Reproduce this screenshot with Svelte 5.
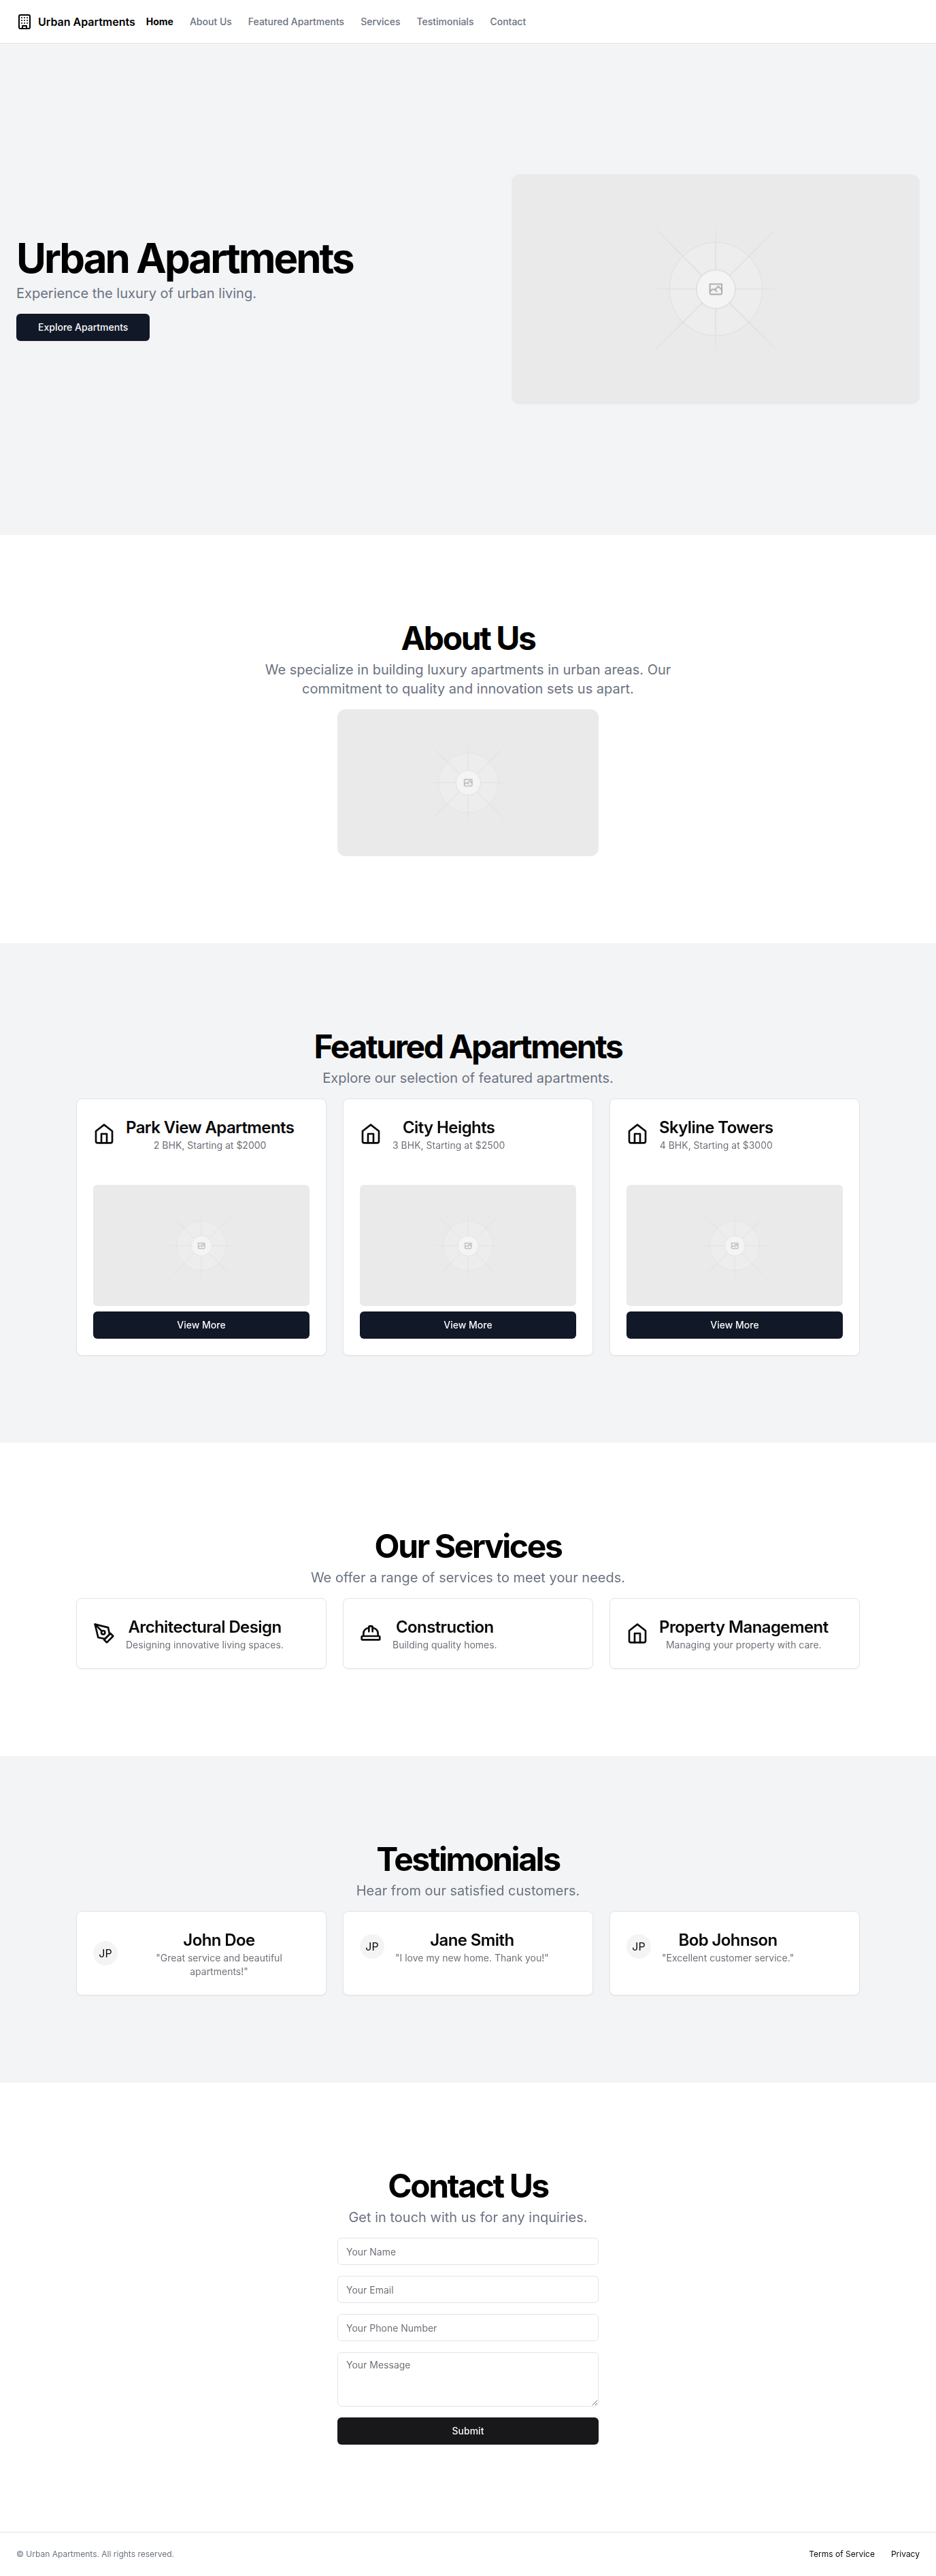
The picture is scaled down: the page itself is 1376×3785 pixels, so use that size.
<script>
  const navLinks = [
    { label: 'Home', href: '#home', active: true },
    { label: 'About Us', href: '#about' },
    { label: 'Featured Apartments', href: '#featured' },
    { label: 'Services', href: '#services' },
    { label: 'Testimonials', href: '#testimonials' },
    { label: 'Contact', href: '#contact' }
  ];

  const apartments = [
    { name: 'Park View Apartments', detail: '2 BHK, Starting at $2000' },
    { name: 'City Heights', detail: '3 BHK, Starting at $2500' },
    { name: 'Skyline Towers', detail: '4 BHK, Starting at $3000' }
  ];

  const services = [
    { icon: 'pen', name: 'Architectural Design', detail: 'Designing innovative living spaces.' },
    { icon: 'hat', name: 'Construction', detail: 'Building quality homes.' },
    { icon: 'home', name: 'Property Management', detail: 'Managing your property with care.' }
  ];

  const testimonials = [
    { name: 'John Doe', quote: '"Great service and beautiful apartments!"' },
    { name: 'Jane Smith', quote: '"I love my new home. Thank you!"' },
    { name: 'Bob Johnson', quote: '"Excellent customer service."' }
  ];
</script>

{#snippet icon(name)}
  <svg
    class="icon"
    class:small={name === 'building'}
    viewBox="0 0 24 24"
    fill="none"
    stroke="currentColor"
    stroke-width="2"
    stroke-linecap="round"
    stroke-linejoin="round"
    aria-hidden="true"
  >
    {#if name === 'building'}
      <rect width="16" height="20" x="4" y="2" rx="2" ry="2" />
      <path d="M9 22v-4h6v4" />
      <path d="M8 6h.01M16 6h.01M12 6h.01M12 10h.01M12 14h.01M16 10h.01M16 14h.01M8 10h.01M8 14h.01" />
    {:else if name === 'pen'}
      <path d="m12 19 7-7 3 3-7 7-3-3z" />
      <path d="m18 13-1.5-7.5L2 2l3.5 14.5L13 18l5-5z" />
      <path d="m2 2 7.586 7.586" />
      <circle cx="11" cy="11" r="2" />
    {:else if name === 'hat'}
      <path d="M2 18a1 1 0 0 0 1 1h18a1 1 0 0 0 1-1v-2a1 1 0 0 0-1-1H3a1 1 0 0 0-1 1v2z" />
      <path d="M10 10V5a1 1 0 0 1 1-1h2a1 1 0 0 1 1 1v5" />
      <path d="M4 15v-3a6 6 0 0 1 6-6h0" />
      <path d="M14 6h0a6 6 0 0 1 6 6v3" />
    {:else}
      <path d="m3 9 9-7 9 7v11a2 2 0 0 1-2 2H5a2 2 0 0 1-2-2z" />
      <polyline points="9 22 9 12 15 12 15 22" />
    {/if}
  </svg>
{/snippet}

{#snippet placeholder(id, label)}
  <svg class="placeholder" viewBox="0 262 1200 675" preserveAspectRatio="xMidYMid slice" role="img" aria-label={label}>
    <defs>
      <linearGradient id="{id}-short" x1="404" x2="797" y1="600" y2="600" gradientUnits="userSpaceOnUse">
        <stop stop-color="#C9C9C9" stop-opacity="0" />
        <stop offset=".208" stop-color="#C9C9C9" />
        <stop offset=".792" stop-color="#C9C9C9" />
        <stop offset="1" stop-color="#C9C9C9" stop-opacity="0" />
      </linearGradient>
      <linearGradient id="{id}-long" x1="324" x2="877" y1="600" y2="600" gradientUnits="userSpaceOnUse">
        <stop stop-color="#C9C9C9" stop-opacity="0" />
        <stop offset=".208" stop-color="#C9C9C9" />
        <stop offset=".792" stop-color="#C9C9C9" />
        <stop offset="1" stop-color="#C9C9C9" stop-opacity="0" />
      </linearGradient>
    </defs>
    <rect width="1200" height="1200" fill="#EAEAEA" />
    <g opacity=".5">
      <circle cx="600.7" cy="599.9" r="136.6" fill="#FAFAFA" stroke="#C9C9C9" stroke-width="2.418" opacity=".5" />
      <g stroke-width="2.418">
        <path stroke="url(#{id}-short)" d="M404 599H797" />
        <path stroke="url(#{id}-short)" d="M404 600H797" transform="rotate(90 600.2 600)" />
        <path stroke="url(#{id}-long)" d="M324 600H877" transform="rotate(45 600.7 600)" />
        <path stroke="url(#{id}-long)" d="M324 600H877" transform="rotate(-45 600.7 600)" />
      </g>
      <circle cx="600.7" cy="599.9" r="56.8" fill="#fff" />
      <path
        fill="#666"
        fill-rule="evenodd"
        d="M616.426 586.58h-31.434v16.176l3.553-3.554.531-.531h9.068l.074-.074 8.463-8.463h2.565l7.18 7.181V586.58Zm-15.715 14.654 3.698 3.699 1.283 1.282-2.565 2.565-1.282-1.283-5.2-5.199h-6.066l-5.514 5.514-.073.073v2.876a2.418 2.418 0 0 0 2.418 2.418h26.598a2.418 2.418 0 0 0 2.418-2.418v-8.317l-8.463-8.463-7.181 7.181-.071.072Zm-19.347 5.442v4.085a6.045 6.045 0 0 0 6.046 6.045h26.598a6.044 6.044 0 0 0 6.045-6.045v-7.108l1.356-1.355-1.282-1.283-.074-.073v-17.989h-38.689v23.43l-.146.146.146.147Z"
      />
      <circle cx="600.7" cy="599.9" r="56.8" fill="none" stroke="#C9C9C9" stroke-width="2.418" />
    </g>
  </svg>
{/snippet}

<header class="topbar">
  <a class="brand" href="#home">
    {@render icon('building')}
    <span>Urban Apartments</span>
  </a>
  <nav aria-label="Main">
    {#each navLinks as link}
      <a href={link.href} class:active={link.active}>{link.label}</a>
    {/each}
  </nav>
</header>

<main>
  <section class="hero shaded" id="home">
    <div class="hero-copy">
      <div class="heading">
        <h1>Urban Apartments</h1>
        <p>Experience the luxury of urban living.</p>
      </div>
      <a class="button explore" href="#featured">Explore Apartments</a>
    </div>
    <div class="frame large">{@render placeholder('hero', 'Urban Apartments')}</div>
  </section>

  <section class="band" id="about">
    <div class="heading">
      <h2>About Us</h2>
      <p>
        We specialize in building luxury apartments in urban areas. Our commitment to quality and innovation sets us
        apart.
      </p>
    </div>
    <div class="frame large narrow">{@render placeholder('about', 'About Us')}</div>
  </section>

  <section class="band shaded" id="featured">
    <div class="heading">
      <h2>Featured Apartments</h2>
      <p>Explore our selection of featured apartments.</p>
    </div>
    <div class="cards">
      {#each apartments as item, i}
        <article class="card">
          <div class="card-head">
            {@render icon('home')}
            <div class="card-text">
              <h3>{item.name}</h3>
              <p>{item.detail}</p>
            </div>
          </div>
          <div class="card-body">
            <div class="frame">{@render placeholder(`apartment-${i}`, item.name)}</div>
            <button class="button" type="button">View More</button>
          </div>
        </article>
      {/each}
    </div>
  </section>

  <section class="band" id="services">
    <div class="heading">
      <h2>Our Services</h2>
      <p>We offer a range of services to meet your needs.</p>
    </div>
    <div class="cards">
      {#each services as item}
        <article class="card">
          <div class="card-head">
            {@render icon(item.icon)}
            <div class="card-text">
              <h3>{item.name}</h3>
              <p>{item.detail}</p>
            </div>
          </div>
        </article>
      {/each}
    </div>
  </section>

  <section class="band shaded" id="testimonials">
    <div class="heading">
      <h2>Testimonials</h2>
      <p>Hear from our satisfied customers.</p>
    </div>
    <div class="cards">
      {#each testimonials as item}
        <article class="card">
          <div class="card-head">
            <span class="avatar">JP</span>
            <div class="card-text">
              <h3>{item.name}</h3>
              <p>{item.quote}</p>
            </div>
          </div>
        </article>
      {/each}
    </div>
  </section>

  <section class="band" id="contact">
    <div class="heading">
      <h2>Contact Us</h2>
      <p>Get in touch with us for any inquiries.</p>
    </div>
    <form class="narrow" onsubmit={(event) => event.preventDefault()}>
      <input type="text" placeholder="Your Name" aria-label="Your Name" />
      <input type="email" placeholder="Your Email" aria-label="Your Email" />
      <input type="tel" placeholder="Your Phone Number" aria-label="Your Phone Number" />
      <textarea placeholder="Your Message" aria-label="Your Message"></textarea>
      <button class="button submit" type="submit">Submit</button>
    </form>
  </section>
</main>

<footer>
  <p>© Urban Apartments. All rights reserved.</p>
  <nav aria-label="Legal">
    <a href="#terms">Terms of Service</a>
    <a href="#privacy">Privacy</a>
  </nav>
</footer>

<style>
  :global(body) {
    margin: 0;
    background: #fff;
    color: #09090b;
    font-family: Inter, 'Liberation Sans', sans-serif;
    font-size: 16px;
    line-height: 24px;
  }

  :global(*) {
    box-sizing: border-box;
  }

  h1,
  h2,
  h3,
  p {
    margin: 0;
  }

  a {
    color: inherit;
    text-decoration: none;
  }

  .icon {
    flex: none;
    width: 32px;
    height: 32px;
  }

  .icon.small {
    width: 24px;
    height: 24px;
  }

  .topbar {
    display: flex;
    align-items: center;
    gap: 16px;
    height: 64px;
    padding: 0 24px;
    border-bottom: 1px solid #e4e4e7;
  }

  .brand {
    display: flex;
    align-items: center;
    gap: 8px;
    color: #000;
    font-weight: 600;
  }

  .topbar nav {
    display: flex;
    gap: 24px;
    color: #6b7280;
    font-size: 14px;
    font-weight: 500;
    line-height: 20px;
  }

  .topbar .active {
    color: #000;
    font-weight: 700;
  }

  .shaded {
    background: #f3f4f6;
  }

  .hero {
    display: grid;
    grid-template-columns: minmax(0, 1fr) 600px;
    gap: 48px;
    padding: 192px 24px;
  }

  .hero-copy {
    display: flex;
    flex-direction: column;
    align-items: flex-start;
    justify-content: center;
    gap: 16px;
  }

  .heading {
    display: flex;
    flex-direction: column;
    gap: 8px;
  }

  h1,
  h2 {
    color: #000;
    font-weight: 700;
    letter-spacing: -0.05em;
    line-height: 1;
  }

  h1 {
    font-size: 60px;
  }

  h2 {
    font-size: 48px;
  }

  .heading p {
    max-width: 600px;
    color: #6b7280;
    font-size: 20px;
    line-height: 28px;
  }

  .band {
    display: flex;
    flex-direction: column;
    align-items: center;
    gap: 16px;
    padding: 128px 24px;
    text-align: center;
  }

  .band .heading {
    align-items: center;
  }

  .narrow {
    width: 100%;
    max-width: 384px;
  }

  .frame {
    overflow: hidden;
    aspect-ratio: 16 / 9;
    border-radius: 6px;
  }

  .frame.large {
    border-radius: 12px;
  }

  .placeholder {
    display: block;
    width: 100%;
    height: 100%;
  }

  .button {
    display: flex;
    align-items: center;
    justify-content: center;
    height: 40px;
    padding: 0 32px;
    border: 0;
    border-radius: 6px;
    background: #111827;
    box-shadow: 0 1px 2px rgb(0 0 0 / 0.05);
    color: #f9fafb;
    font-family: inherit;
    font-size: 14px;
    font-weight: 500;
    line-height: 20px;
    cursor: pointer;
  }

  .submit {
    background: #18181b;
    box-shadow: none;
    color: #fafafa;
  }

  .cards {
    display: grid;
    grid-template-columns: repeat(3, minmax(0, 1fr));
    gap: 24px;
    width: 100%;
    max-width: 1152px;
  }

  .card {
    border: 1px solid #e4e4e7;
    border-radius: 8px;
    background: #fff;
    box-shadow: 0 1px 2px rgb(0 0 0 / 0.05);
  }

  .card-head {
    display: flex;
    align-items: center;
    gap: 16px;
    padding: 24px;
  }

  .card-text {
    display: flex;
    flex-direction: column;
    gap: 4px;
    margin-top: 6px;
  }

  h3 {
    font-size: 24px;
    font-weight: 600;
    letter-spacing: -0.025em;
    line-height: 24px;
  }

  .card-text p {
    color: #71717a;
    font-size: 14px;
    line-height: 20px;
  }

  .card-body {
    display: flex;
    flex-direction: column;
    gap: 8px;
    padding: 24px;
  }

  .avatar {
    display: flex;
    flex: none;
    align-items: center;
    justify-content: center;
    width: 36px;
    height: 36px;
    border-radius: 50%;
    background: #f4f4f5;
  }

  form {
    display: flex;
    flex-direction: column;
    gap: 16px;
  }

  input,
  textarea {
    width: 100%;
    padding: 8px 12px;
    border: 1px solid #e4e4e7;
    border-radius: 6px;
    background: #fff;
    color: inherit;
    font-family: inherit;
    font-size: 14px;
    line-height: 20px;
  }

  input {
    height: 40px;
  }

  textarea {
    display: block;
    height: 80px;
    resize: vertical;
  }

  input::placeholder,
  textarea::placeholder {
    color: #71717a;
    opacity: 1;
  }

  footer {
    display: flex;
    align-items: center;
    justify-content: space-between;
    padding: 24px;
    border-top: 1px solid #e4e4e7;
    font-size: 12px;
    line-height: 16px;
  }

  footer p {
    color: #6b7280;
  }

  footer nav {
    display: flex;
    gap: 24px;
  }

  @media (max-width: 1023px) {
    .hero,
    .cards {
      grid-template-columns: minmax(0, 1fr);
    }

    .topbar {
      flex-wrap: wrap;
      height: auto;
      min-height: 64px;
    }

    .topbar nav {
      flex-wrap: wrap;
    }
  }
</style>
